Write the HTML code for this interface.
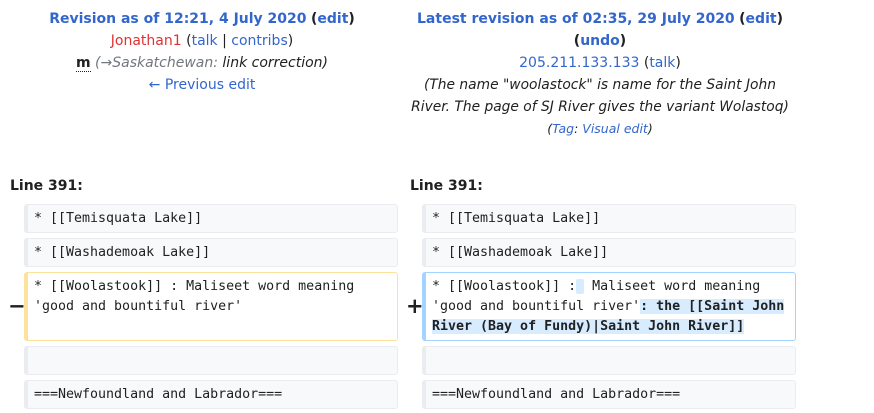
<!DOCTYPE html>
<html><head><style>
body{margin:0;width:874px;height:413px;background:#fff;font-family:"DejaVu Sans","Liberation Sans",sans-serif;color:#202122;position:relative;overflow:hidden}
.hd{position:absolute;text-align:center;font-size:14px;line-height:22px}
a{color:#3366cc;text-decoration:none}
.b{font-weight:bold}
i{font-style:italic;color:#202122}
.g{color:#72777d}
.ln{position:absolute;top:178px;font-weight:bold;font-size:14px}
.box{position:absolute;box-sizing:border-box;border:1px solid #eaecf0;border-left:4px solid #eaecf0;background:#f8f9fa;border-radius:3px;font-family:"DejaVu Sans Mono","Liberation Mono",monospace;font-size:13.3px;line-height:20px;padding:4px 0 0 6px;white-space:pre;color:#202122}
.del{background:#fff;border-color:#fde29b}
.add{background:#fff;border-color:#a3d3ff}
.hl{background:#d8ecff;border-radius:2px}
.hlb{background:#d8ecff;font-weight:bold}
.mk{position:absolute;font-size:21px;font-weight:bold;top:294px}
</style></head><body>
<div class="hd" style="left:0;width:404px;top:8px">
<div><a class="b" href="#">Revision as of 12:21, 4 July 2020</a> <span class="b">(<a href="#">edit</a>)</span></div>
<div><a href="#" style="color:#d33">Jonathan1</a> (<a href="#">talk</a> | <a href="#">contribs</a>)</div>
<div><span class="b" style="border-bottom:1px dotted #202122">m</span> <i><span class="g">(→Saskatchewan: </span> link correction)</i></div>
<div><a href="#">← Previous edit</a></div>
</div>
<div class="hd" style="left:400px;width:400px;top:8px">
<div><a class="b" href="#">Latest revision as of 02:35, 29 July 2020</a> <span class="b">(<a href="#">edit</a>)</span></div>
<div class="b">(<a href="#">undo</a>)</div>
<div><a href="#">205.211.133.133</a> (<a href="#">talk</a>)</div>
<div style="font-size:13.8px"><i>(The name "woolastock" is name for the Saint John</i></div>
<div style="font-size:13.8px"><i>River. The page of SJ River gives the variant Wolastoq)</i></div>
<div style="font-size:12.5px"><i>(<a href="#">Tag</a>: <a href="#">Visual edit</a>)</i></div>
</div>
<div class="ln" style="left:10px">Line 391:</div>
<div class="ln" style="left:410px">Line 391:</div>

<div class="box" style="left:24px;top:204px;width:374px;height:29px">* [[Temisquata Lake]]</div>
<div class="box" style="left:24px;top:238px;width:374px;height:29px">* [[Washademoak Lake]]</div>
<div class="box del" style="left:24px;top:272px;width:374px;height:69px">* [[Woolastook]] : Maliseet word meaning
'good and bountiful river'</div>
<div class="box" style="left:24px;top:346px;width:374px;height:29px"> </div>
<div class="box" style="left:24px;top:380px;width:374px;height:29px">===Newfoundland and Labrador===</div>
<div class="mk" style="left:8px">−</div>

<div class="box" style="left:422px;top:204px;width:374px;height:29px">* [[Temisquata Lake]]</div>
<div class="box" style="left:422px;top:238px;width:374px;height:29px">* [[Washademoak Lake]]</div>
<div class="box add" style="left:422px;top:272px;width:374px;height:69px">* [[Woolastook]] :<span class="hl"> </span> Maliseet word meaning
'good and bountiful river'<span class="hlb">: the [[Saint John</span>
<span class="hlb">River (Bay of Fundy)|Saint John River]]</span></div>
<div class="box" style="left:422px;top:346px;width:374px;height:29px"> </div>
<div class="box" style="left:422px;top:380px;width:374px;height:29px">===Newfoundland and Labrador===</div>
<div class="mk" style="left:406px">+</div>
</body></html>
